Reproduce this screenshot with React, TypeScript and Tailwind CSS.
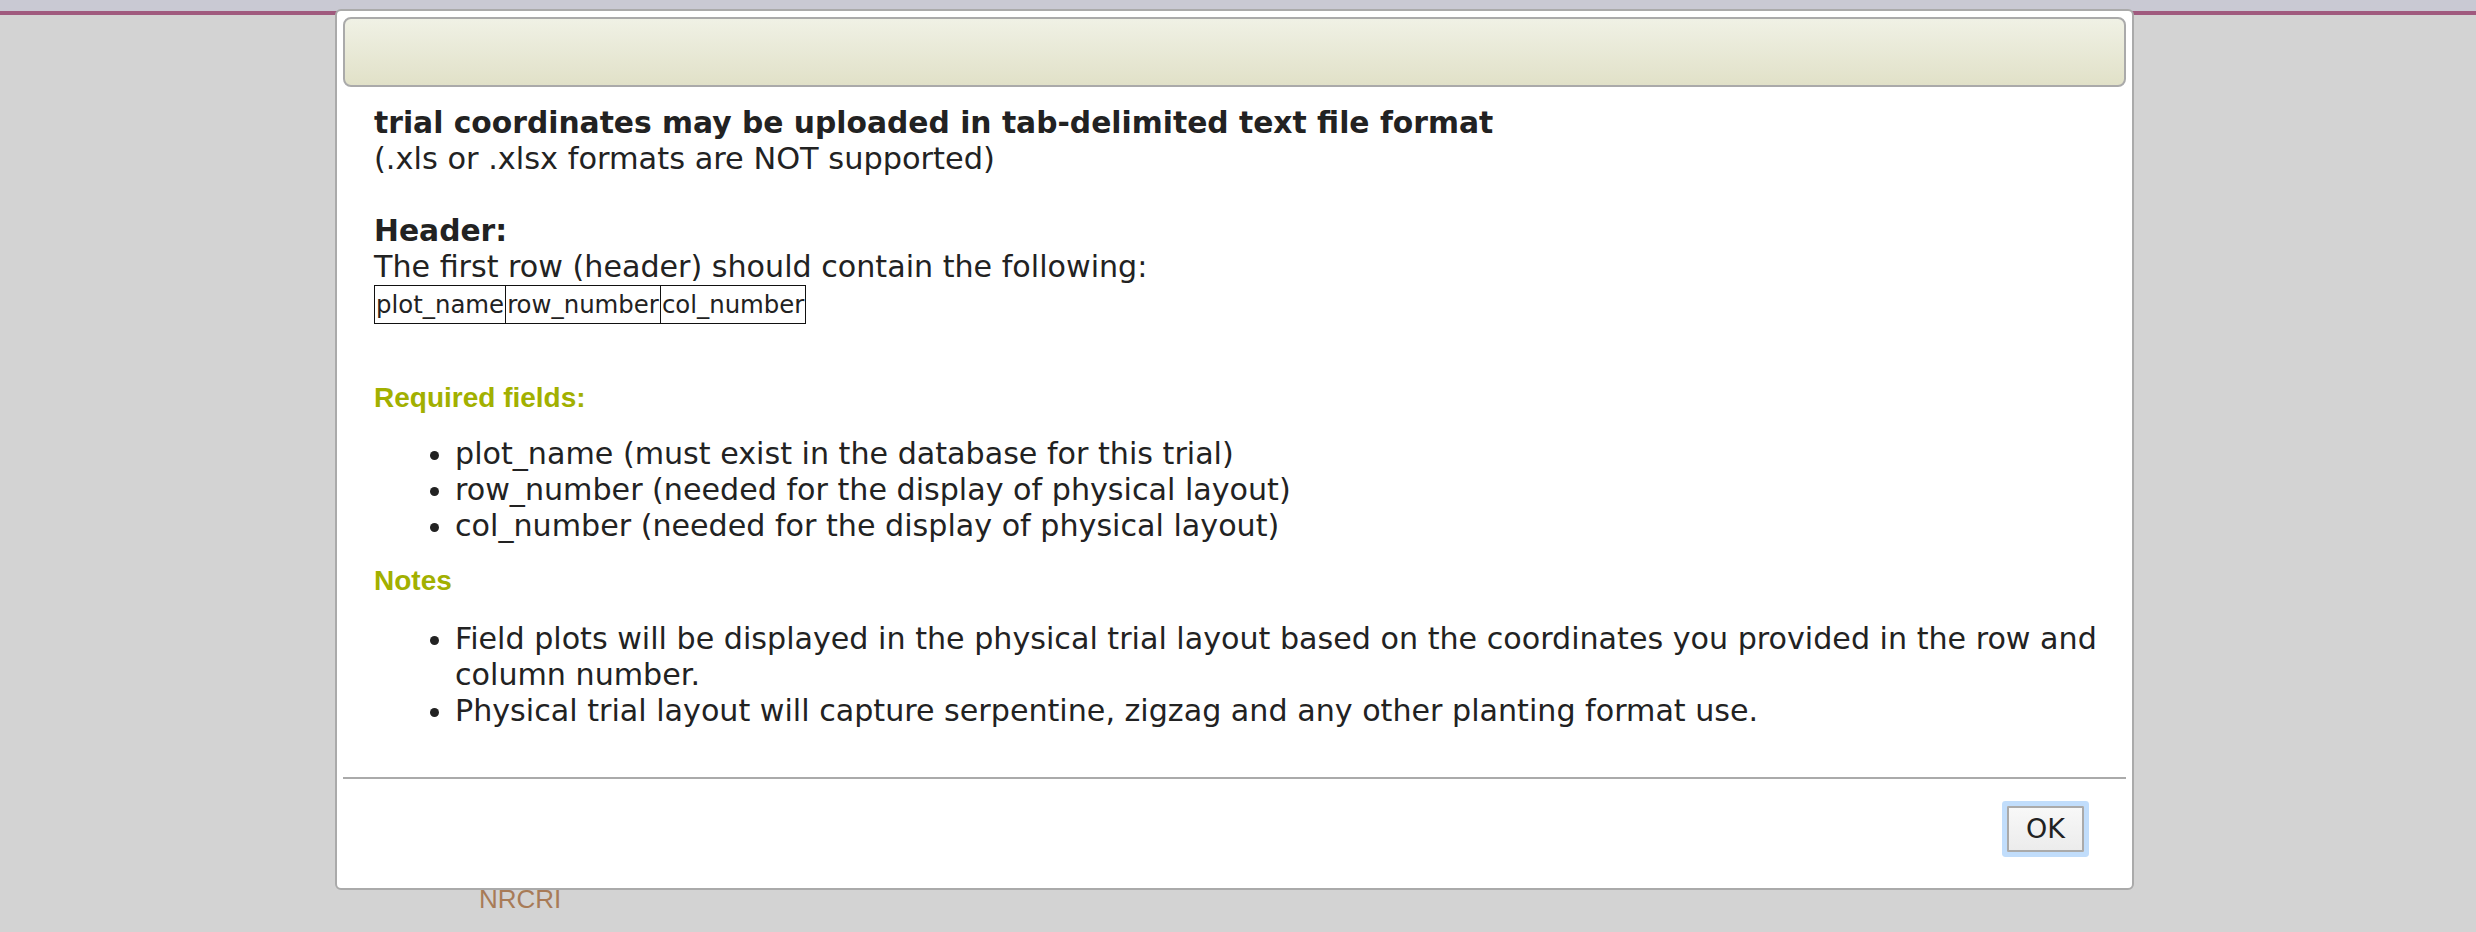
import React from "react";

const body = { fontFamily: '"DejaVu Sans", Verdana, sans-serif' };
const arial = { fontFamily: '"Liberation Sans", Arial, sans-serif' };

export default function App() {
  return (
    <div className="relative w-[2476px] h-[932px] overflow-hidden bg-[#d3d3d3]">
      <div className="h-[11px] bg-[#c9c9d3]" />
      <div className="h-[4px] bg-[#a05a7e]" />
      <div className="pt-[869px] pl-[479px]">
        <span className="text-[26px] leading-[30px] text-[#a87b57]" style={arial}>
          NRCRI
        </span>
      </div>

      <div
        className="absolute left-[335px] top-[9px] w-[1799px] border-2 border-[#aaaaaa] rounded-[6px] bg-white p-[6px] text-[#222222]"
        style={body}
      >
        <div className="h-[70px] border-2 border-[#aaaaaa] rounded-[8px] bg-gradient-to-b from-[#f0f1e5] to-[#e1e1c8]" />

        <div className="pt-[18px] pl-[31px] pr-[24px] pb-[48px] text-[30.15px] leading-[36px]">
          <div className="font-bold text-[29.75px]">trial coordinates may be uploaded in tab-delimited text file format</div>
          <div className="text-[30.4px]">(.xls or .xlsx formats are NOT supported)</div>
          <div className="h-[36px]" />
          <div className="font-bold text-[29.75px]">Header:</div>
          <div>The first row (header) should contain the following:</div>
          <table className="border-collapse text-[24.4px] leading-[29px]">
            <tbody>
              <tr>
                <td className="border border-[#111111] px-[1px] py-[4px]">plot_name</td>
                <td className="border border-[#111111] px-[1px] py-[4px]">row_number</td>
                <td className="border border-[#111111] px-[1px] py-[4px]">col_number</td>
              </tr>
            </tbody>
          </table>

          <h4 className="mt-[58px] text-[28px] leading-[32px] font-bold text-[#a2b000]" style={arial}>
            Required fields:
          </h4>
          <ul className="mt-[22px] list-disc pl-[81px]">
            <li>plot_name (must exist in the database for this trial)</li>
            <li>row_number (needed for the display of physical layout)</li>
            <li>col_number (needed for the display of physical layout)</li>
          </ul>

          <h4 className="mt-[21px] text-[28px] leading-[32px] font-bold text-[#a2b000]" style={arial}>
            Notes
          </h4>
          <ul className="mt-[24px] list-disc pl-[81px]">
            <li>
              Field plots will be displayed in the physical trial layout based on the coordinates you provided in the row and column number.
            </li>
            <li>Physical trial layout will capture serpentine, zigzag and any other planting format use.</li>
          </ul>
        </div>

        <div className="border-t-2 border-[#aaaaaa] flex justify-end pt-[27px] pb-[30px] pr-[42px]">
          <button
            className="w-[77px] h-[46px] border-2 border-[#aaaaaa] bg-gradient-to-b from-[#f8f8f8] to-[#ececec] text-[27px] leading-[30px] text-[#222222] ring-[5px] ring-[#c1ddfb] rounded-[1px]"
            style={body}
          >
            OK
          </button>
        </div>
      </div>
    </div>
  );
}
